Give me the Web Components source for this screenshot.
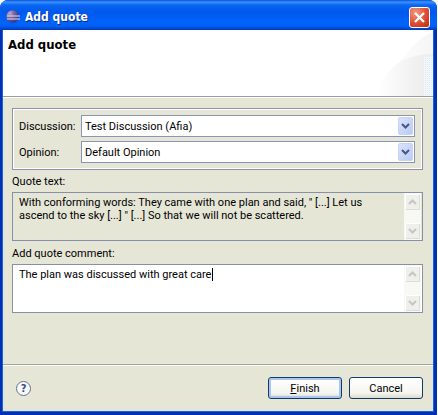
<!DOCTYPE html>
<html lang="en">
<head>
<meta charset="utf-8">
<title>Add quote</title>
<style>
  html, body { height: 100%; margin: 0; }
  body {
    background: #fff;
    color: #000;
    font: 11px/13px Roboto, "Liberation Sans", sans-serif;
  }
</style>
</head>
<body>
<quote-dialog></quote-dialog>
<script>
const define = (name, html, setup) => {
  const template = document.createElement('template');
  template.innerHTML = html;
  customElements.define(name, class extends HTMLElement {
    constructor() {
      super();
      this.attachShadow({ mode: 'open' }).append(template.content.cloneNode(true));
    }
    connectedCallback() { if (setup) setup(this, this.shadowRoot); }
  });
};

define('title-bar', `
<style>
  :host {
    display: flex; align-items: center; gap: 5px; height: 30px; box-sizing: border-box;
    padding: 4px 7px 0 6px; border-radius: 7px 7px 0 0;
    background: linear-gradient(#0a50d8 0, #3a93ff 2px, #0a66f0 5px, #0058ec 12px, #0064fb 22px, #0062f6 26px, #0038b8 30px);
    color: #fff;
  }
  h1 { flex: 1; margin: 0; font: bold 12px/16px "DejaVu Sans Condensed", sans-serif; text-shadow: 1px 1px #0b2c86; }
  button {
    width: 21px; height: 21px; padding: 0; border: 1px solid #fff; border-radius: 3px;
    background: radial-gradient(circle at 30% 25%, #f09a80, #e0533a 50%, #b92b12); display: grid; place-items: center;
  }
  svg { display: block; }
</style>
<svg width="14" height="14" viewBox="0 0 14 14" aria-hidden="true">
  <defs><radialGradient id="g" cx=".3" cy=".25" r=".8"><stop offset="0" stop-color="#b9a9d2"/><stop offset=".45" stop-color="#75619f"/><stop offset="1" stop-color="#3c2f86"/></radialGradient></defs>
  <circle cx="6.5" cy="6.5" r="6.3" fill="url(#g)"/>
  <path d="M1 6h13M1 9h13" stroke="#e4dff5" stroke-width="1.1"/>
</svg>
<h1><slot></slot></h1>
<button type="button" aria-label="Close"><svg width="13" height="13" viewBox="0 0 13 13"><path d="M2 2l9 9M11 2l-9 9" stroke="#fff" stroke-width="2.3"/></svg></button>
`);

define('wizard-header', `
<style>
  :host {
    display: flex; justify-content: space-between; height: 66px; background: #fff;
    border-bottom: 1px solid #9d9d98; box-shadow: 0 1px #fff; overflow: hidden;
  }
  h2 { margin: 7px 0 0 5px; font: bold 13px/16px "DejaVu Sans Condensed", sans-serif; }
  svg { display: block; }
</style>
<h2><slot></slot></h2>
<svg width="60" height="66" viewBox="0 0 60 66" aria-hidden="true">
  <defs>
    <linearGradient id="a"><stop offset="0" stop-color="#fff"/><stop offset=".7" stop-color="#f0f0f0"/><stop offset="1" stop-color="#ededee"/></linearGradient>
    <linearGradient id="c"><stop offset="0" stop-color="#fcfcfc"/><stop offset="1" stop-color="#f5f5f5"/></linearGradient>
    <pattern id="p" width="2" height="2" patternUnits="userSpaceOnUse"><rect width="2" height="2" fill="#f2f6f9"/><rect width="1" height="1" fill="#dcebf6"/></pattern>
  </defs>
  <path d="M4 66C8 50 16 38 28 31C36 20 46 8 60 2V66z" fill="url(#a)"/>
  <path d="M28 31C36 20 46 8 60 2V24Q42 24 28 31z" fill="url(#c)"/>
  <path d="M51 26h9v40h-9z" fill="url(#p)"/>
</svg>
`);

define('choice-row', `
<style>
  :host { display: flex; align-items: center; }
  label { width: 62px; flex: none; }
  .box { position: relative; flex: 1; min-width: 0; }
  select {
    appearance: none; display: block; width: 100%; height: 22px; box-sizing: border-box; margin: 0;
    padding: 0 20px 0 3px; border: 1px solid #8a94b4; border-radius: 0; background: #fff; color: inherit; font: inherit;
  }
  svg { position: absolute; right: 2px; top: 2px; pointer-events: none; }
</style>
<label for="s"></label>
<div class="box"><select id="s"><option></option></select>
<svg width="15" height="18" viewBox="0 0 15 18" aria-hidden="true">
  <defs><linearGradient id="b" x2="1" y2="1"><stop offset="0" stop-color="#dde4fc"/><stop offset="1" stop-color="#b9c9f3"/></linearGradient></defs>
  <rect x=".5" y=".5" width="14" height="17" rx="1.5" fill="url(#b)" stroke="#c6d2f6"/>
  <path d="M4 7l3.5 3.5L11 7" fill="none" stroke="#44568a" stroke-width="2"/>
</svg></div>
`, (host, root) => {
  root.querySelector('label').textContent = host.getAttribute('label');
  root.querySelector('option').textContent = host.getAttribute('value');
});

define('choice-group', `
<style>
  :host { display: grid; gap: 4px; padding: 6px 7px 6px 6px; border: 1px solid #9290a8; box-shadow: inset 1px 1px #fff, inset -1px -1px #fff; }
</style>
<slot></slot>
`);

define('scroll-rail', `
<style>
  :host { display: flex; flex-direction: column; justify-content: space-between; width: 17px; background: #f8f8f5; }
  button { width: 17px; height: 18px; padding: 1px; border: 0; background: none; }
  svg { display: block; }
</style>
<button type="button" disabled aria-label="Scroll up"><svg width="15" height="16" viewBox="0 0 15 16"><rect x=".5" y=".5" width="14" height="15" rx="1" fill="#efefeb" stroke="#fff"/><path d="M1 15.5h13.5V1" fill="none" stroke="#dcdcd8"/><path d="M4 10l3.5-3.5L11 10" fill="none" stroke="#c5c5c5" stroke-width="2"/></svg></button>
<button type="button" disabled aria-label="Scroll down"><svg width="15" height="16" viewBox="0 0 15 16"><rect x=".5" y=".5" width="14" height="15" rx="1" fill="#efefeb" stroke="#fff"/><path d="M1 15.5h13.5V1" fill="none" stroke="#dcdcd8"/><path d="M4 6l3.5 3.5L11 6" fill="none" stroke="#c5c5c5" stroke-width="2"/></svg></button>
`);

define('text-field', `
<style>
  :host { display: block; }
  label { display: block; height: 17px; }
  .box { position: relative; display: flex; padding: 0 1px 0 0; border: 1px solid #8790a8; background: #fff; }
  :host([readonly]) .box { background: #e5e6d6; }
  textarea {
    flex: 1; min-width: 0; height: 47px; box-sizing: border-box; margin: 0; padding: 3px 6px; border: 0; outline: 0;
    resize: none; overflow: hidden; background: none; color: inherit; font: inherit;
  }
  .caret { position: absolute; top: 3px; width: 1px; height: 13px; background: #000; }
</style>
<label for="t"></label>
<div class="box"><textarea id="t"></textarea><scroll-rail></scroll-rail></div>
`, (host, root) => {
  const area = root.querySelector('textarea');
  root.querySelector('label').textContent = host.getAttribute('label');
  area.value = host.getAttribute('value');
  area.readOnly = host.hasAttribute('readonly');
  if (host.hasAttribute('caret')) {
    const pen = document.createElement('canvas').getContext('2d');
    pen.font = getComputedStyle(area).font;
    const caret = document.createElement('span');
    caret.className = 'caret';
    caret.style.left = Math.ceil(6 + pen.measureText(area.value).width) + 'px';
    area.after(caret);
  }
});

define('push-button', `
<style>
  :host { display: block; width: 74px; }
  button {
    display: block; width: 100%; height: 22px; padding: 0; border: 1px solid #123c66; border-radius: 3px; color: inherit; font: inherit;
    background: linear-gradient(#fff, #f5f5f0 75%, #dcd9cf);
  }
  :host([primary]) button { box-shadow: inset 0 0 0 2px #a9c5f3; }
</style>
<button type="button"><slot></slot></button>
`);

define('button-bar', `
<style>
  :host { display: flex; align-items: center; gap: 7px; height: 46px; padding: 0 10px 0 13px; border-top: 1px solid #a3a493; box-shadow: inset 0 1px #fff; }
  .help { margin: 0 auto 0 0; padding: 0; border: 1px solid #65708f; border-radius: 50%; width: 15px; height: 15px; background: #f8f9fc; color: #3f4c7c; font: bold 11px/13px "DejaVu Sans Condensed", sans-serif; }
</style>
<button class="help" type="button" aria-label="Help">?</button>
<slot></slot>
`);

define('quote-dialog', `
<style>
  :host {
    display: flex; flex-direction: column; min-height: 100vh; box-sizing: border-box; margin-right: 1px;
    border-radius: 8px 8px 0 0; background: #0040cc; overflow: hidden;
  }
  .body {
    flex: 1; display: flex; flex-direction: column; margin: 0 4px 4px 3px; background: #e5e6d6;
    box-shadow: 0 0 0 1px #1a62e0, 0 0 0 4px #0030b4;
  }
  title-bar { position: relative; }
  form { flex: 1; display: flex; flex-direction: column; margin: 0; padding: 11px 10px 8px 9px; }
  choice-group { margin-bottom: 5px; }
  text-field { margin-bottom: 6px; }
</style>
<title-bar>Add quote</title-bar>
<div class="body">
  <wizard-header>Add quote</wizard-header>
  <form>
    <choice-group>
      <choice-row label="Discussion:" value="Test Discussion (Afia)"></choice-row>
      <choice-row label="Opinion:" value="Default Opinion"></choice-row>
    </choice-group>
    <text-field readonly label="Quote text:" value='With conforming words: They came with one plan and said, " [...] Let us ascend to the sky [...] " [...] So that we will not be scattered.'></text-field>
    <text-field caret label="Add quote comment:" value="The plan was discussed with great care"></text-field>
  </form>
  <button-bar>
    <push-button primary><u>F</u>inish</push-button>
    <push-button>Cancel</push-button>
  </button-bar>
</div>
`);
</script>
</body>
</html>
